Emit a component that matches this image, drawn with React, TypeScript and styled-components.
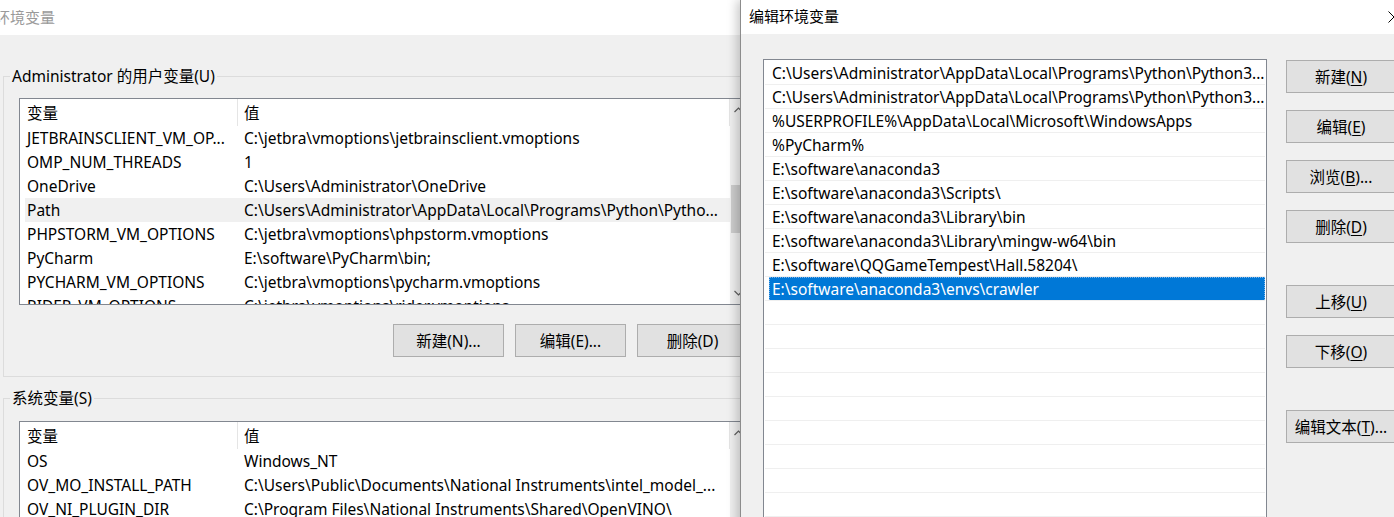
import React from "react";
import styled, { createGlobalStyle } from "styled-components";

const GlobalStyle = createGlobalStyle`
  html, body { margin: 0; padding: 0; background: #f0f0f0; overflow: hidden; }
  body {
    font-family: "Noto Sans", "Noto Sans CJK SC", sans-serif;
    font-size: 15.5px;
    color: #000;
  }
  * { box-sizing: border-box; }
`;

const Desktop = styled.div`
  position: relative;
  width: 1394px;
  height: 517px;
  overflow: hidden;
  background: #f0f0f0;
`;

/* ---------- windows ---------- */
const MainWindow = styled.div`
  position: absolute;
  left: -9px;
  top: 0;
  width: 790px;
  height: 600px;
  display: flex;
  flex-direction: column;
  background: #f0f0f0;
`;

const Dialog = styled.div`
  position: absolute;
  left: 740px;
  top: 0;
  width: 683px;
  height: 600px;
  display: flex;
  flex-direction: column;
  background: #f0f0f0;
  border-left: 1px solid #8c8c8c;
  box-shadow: -3px 0 10px rgba(0, 0, 0, 0.22);
`;

const TitleBar = styled.div<{ $active?: boolean; $h: number; $pl: number }>`
  height: ${(p) => p.$h}px;
  flex-shrink: 0;
  background: #fff;
  display: flex;
  align-items: center;
  justify-content: space-between;
  padding-left: ${(p) => p.$pl}px;
  color: ${(p) => (p.$active ? "#000" : "#9a9a9a")};
  font-size: 15px;
`;

const TitleText = styled.span`
  line-height: 20px;
  white-space: nowrap;
  margin-top: -2px;
`;

const CloseButton = styled.div`
  width: 58px;
  height: 100%;
  display: flex;
  align-items: center;
  justify-content: center;
`;

/* ---------- main window body ---------- */
const MainBody = styled.div`
  flex: 1;
  padding: 31px 0 0 12px;
  display: flex;
  flex-direction: column;
`;

const GroupBox = styled.fieldset<{ $mt?: number; $pt: number }>`
  margin: ${(p) => p.$mt ?? 0}px 0 0 0;
  padding: ${(p) => p.$pt}px 15px 19px 15px;
  border: 1px solid #dcdcdc;
  width: 761px;
  min-width: 0;
  display: flex;
  flex-direction: column;
`;

const Legend = styled.legend`
  margin-left: -9px;
  padding: 0 2px;
  line-height: 20px;
  white-space: nowrap;
`;

const ButtonRow = styled.div`
  display: flex;
  justify-content: flex-end;
  gap: 11px;
  margin-top: 19px;
`;

const Button = styled.div<{ $w: number; $mt?: number }>`
  width: ${(p) => p.$w}px;
  height: 33px;
  flex-shrink: 0;
  margin-top: ${(p) => p.$mt ?? 0}px;
  background: #e1e1e1;
  border: 1px solid #adadad;
  display: flex;
  align-items: center;
  justify-content: center;
  line-height: 20px;
  white-space: nowrap;
  color: #000;
`;

const Key = styled.span`
  text-decoration: underline;
  text-underline-offset: 2px;
`;

/* ---------- list view ---------- */
const ListView = styled.div<{ $h: number }>`
  height: ${(p) => p.$h}px;
  border: 1px solid #828790;
  background: #fff;
  display: flex;
  overflow: hidden;
  flex-shrink: 0;
`;

const ListMain = styled.div`
  flex: 1;
  min-width: 0;
  display: flex;
  flex-direction: column;
  overflow: hidden;
`;

const HeaderRow = styled.div`
  height: 27px;
  flex-shrink: 0;
  margin-left: 5px;
  display: flex;
`;

const HeaderCell = styled.div<{ $first?: boolean }>`
  ${(p) => (p.$first ? "width: 213px;" : "flex: 1;")}
  padding-left: ${(p) => (p.$first ? 2 : 6)}px;
  border-right: 1px solid #e5e5e5;
  display: flex;
  align-items: center;
  line-height: 20px;
  white-space: nowrap;
`;

const Row = styled.div<{ $hot?: boolean }>`
  height: 24px;
  flex-shrink: 0;
  margin-left: 5px;
  display: flex;
  align-items: center;
  background: ${(p) => (p.$hot ? "#f0f0f0" : "transparent")};
`;

const Cell = styled.div<{ $first?: boolean }>`
  ${(p) => (p.$first ? "width: 213px;" : "flex: 1;")}
  padding-left: ${(p) => (p.$first ? 2 : 6)}px;
  line-height: 20px;
  white-space: nowrap;
  overflow: hidden;
`;

const ScrollBar = styled.div`
  width: 17px;
  flex-shrink: 0;
  background: #f0f0f0;
  display: flex;
  flex-direction: column;
`;

const ArrowBox = styled.div`
  height: 22px;
  flex-shrink: 0;
  display: flex;
  align-items: center;
  justify-content: center;
`;

const Track = styled.div`
  flex: 1;
  display: flex;
  flex-direction: column;
  align-items: center;
`;

const Thumb = styled.div<{ $top: number; $len: number }>`
  margin-top: ${(p) => p.$top}px;
  width: 15px;
  height: ${(p) => p.$len}px;
  background: #cdcdcd;
`;

/* ---------- dialog body ---------- */
const DialogBody = styled.div`
  flex: 1;
  padding: 25px 0 0 22px;
  display: flex;
  gap: 19px;
  align-items: flex-start;
`;

const PathList = styled.div`
  width: 504px;
  height: 500px;
  border: 1px solid #828790;
  background: #fff;
  padding: 1px 1px 0 1px;
  display: flex;
  flex-direction: column;
  overflow: hidden;
`;

const PathRow = styled.div`
  height: 24px;
  flex-shrink: 0;
  border-bottom: 1px solid #efefef;
  display: flex;
`;

const PathItem = styled.div<{ $sel?: boolean }>`
  flex: 1;
  margin-left: 4px;
  padding: 1px 0 0 2px;
  line-height: 20px;
  white-space: nowrap;
  overflow: hidden;
  background: ${(p) => (p.$sel ? "#0078d7" : "transparent")};
  color: ${(p) => (p.$sel ? "#fff" : "#000")};
  border: 1px ${(p) => (p.$sel ? "dotted #7fb6ea" : "solid transparent")};
  border-bottom: none;
`;

const SideButtons = styled.div`
  display: flex;
  flex-direction: column;
  gap: 17px;
  padding-top: 1px;
`;

/* ---------- icons ---------- */
const Chevron = ({ up }: { up?: boolean }) => (
  <svg width="9" height="6" viewBox="0 0 9 6">
    <polyline
      points={up ? "0.5,5 4.5,1 8.5,5" : "0.5,1 4.5,5 8.5,1"}
      fill="none"
      stroke="#606060"
      strokeWidth="1.2"
    />
  </svg>
);

const CloseIcon = () => (
  <svg width="12" height="12" viewBox="0 0 12 12">
    <path d="M0.5 0.5 L11.5 11.5 M11.5 0.5 L0.5 11.5" stroke="#000" strokeWidth="1" />
  </svg>
);

/* ---------- data ---------- */
type Var = { name: string; value: string; hot?: boolean };

const userVars: Var[] = [
  { name: "JETBRAINSCLIENT_VM_OP...", value: "C:\\jetbra\\vmoptions\\jetbrainsclient.vmoptions" },
  { name: "OMP_NUM_THREADS", value: "1" },
  { name: "OneDrive", value: "C:\\Users\\Administrator\\OneDrive" },
  { name: "Path", value: "C:\\Users\\Administrator\\AppData\\Local\\Programs\\Python\\Pytho...", hot: true },
  { name: "PHPSTORM_VM_OPTIONS", value: "C:\\jetbra\\vmoptions\\phpstorm.vmoptions" },
  { name: "PyCharm", value: "E:\\software\\PyCharm\\bin;" },
  { name: "PYCHARM_VM_OPTIONS", value: "C:\\jetbra\\vmoptions\\pycharm.vmoptions" },
  { name: "RIDER_VM_OPTIONS", value: "C:\\jetbra\\vmoptions\\rider.vmoptions" },
];

const systemVars: Var[] = [
  { name: "OS", value: "Windows_NT" },
  { name: "OV_MO_INSTALL_PATH", value: "C:\\Users\\Public\\Documents\\National Instruments\\intel_model_..." },
  { name: "OV_NI_PLUGIN_DIR", value: "C:\\Program Files\\National Instruments\\Shared\\OpenVINO\\" },
  { name: "Path", value: "C:\\Windows\\system32;C:\\Windows;" },
];

const pathEntries: string[] = [
  "C:\\Users\\Administrator\\AppData\\Local\\Programs\\Python\\Python3...",
  "C:\\Users\\Administrator\\AppData\\Local\\Programs\\Python\\Python3...",
  "%USERPROFILE%\\AppData\\Local\\Microsoft\\WindowsApps",
  "%PyCharm%",
  "E:\\software\\anaconda3",
  "E:\\software\\anaconda3\\Scripts\\",
  "E:\\software\\anaconda3\\Library\\bin",
  "E:\\software\\anaconda3\\Library\\mingw-w64\\bin",
  "E:\\software\\QQGameTempest\\Hall.58204\\",
  "E:\\software\\anaconda3\\envs\\crawler",
];
const SELECTED = 9;
const TOTAL_ROWS = 20;

/* ---------- components ---------- */
const VarList = ({ vars, height, thumb }: { vars: Var[]; height: number; thumb?: { top: number; len: number } }) => (
  <ListView $h={height}>
    <ListMain>
      <HeaderRow>
        <HeaderCell $first>变量</HeaderCell>
        <HeaderCell>值</HeaderCell>
      </HeaderRow>
      {vars.map((v, i) => (
        <Row key={i} $hot={v.hot}>
          <Cell $first>{v.name}</Cell>
          <Cell>{v.value}</Cell>
        </Row>
      ))}
    </ListMain>
    <ScrollBar>
      <ArrowBox>
        <Chevron up />
      </ArrowBox>
      <Track>{thumb && <Thumb $top={thumb.top} $len={thumb.len} />}</Track>
      <ArrowBox>
        <Chevron />
      </ArrowBox>
    </ScrollBar>
  </ListView>
);

const sideButtons: { label: string; key: string; tail: string; mt?: number }[] = [
  { label: "新建(", key: "N", tail: ")" },
  { label: "编辑(", key: "E", tail: ")" },
  { label: "浏览(", key: "B", tail: ")..." },
  { label: "删除(", key: "D", tail: ")" },
  { label: "上移(", key: "U", tail: ")", mt: 25 },
  { label: "下移(", key: "O", tail: ")" },
  { label: "编辑文本(", key: "T", tail: ")...", mt: 25 },
];

export default function App() {
  return (
    <>
      <GlobalStyle />
      <Desktop>
        <MainWindow>
          <TitleBar $h={35} $pl={4}>
            <TitleText>环境变量</TitleText>
          </TitleBar>
          <MainBody>
            <GroupBox $pt={12}>
              <Legend>Administrator 的用户变量(U)</Legend>
              <VarList vars={userVars} height={207} thumb={{ top: 64, len: 48 }} />
              <ButtonRow>
                <Button $w={111}>新建(N)...</Button>
                <Button $w={111}>编辑(E)...</Button>
                <Button $w={111}>删除(D)</Button>
              </ButtonRow>
            </GroupBox>
            <GroupBox $mt={11} $pt={13}>
              <Legend>系统变量(S)</Legend>
              <VarList vars={systemVars} height={207} />
            </GroupBox>
          </MainBody>
        </MainWindow>

        <Dialog>
          <TitleBar $active $h={34} $pl={8}>
            <TitleText>编辑环境变量</TitleText>
            <CloseButton>
              <CloseIcon />
            </CloseButton>
          </TitleBar>
          <DialogBody>
            <PathList>
              {Array.from({ length: TOTAL_ROWS }).map((_, i) => (
                <PathRow key={i}>
                  <PathItem $sel={i === SELECTED}>{pathEntries[i] ?? ""}</PathItem>
                </PathRow>
              ))}
            </PathList>
            <SideButtons>
              {sideButtons.map((b) => (
                <Button key={b.key} $w={110} $mt={b.mt}>
                  {b.label}
                  <Key>{b.key}</Key>
                  {b.tail}
                </Button>
              ))}
            </SideButtons>
          </DialogBody>
        </Dialog>
      </Desktop>
    </>
  );
}
